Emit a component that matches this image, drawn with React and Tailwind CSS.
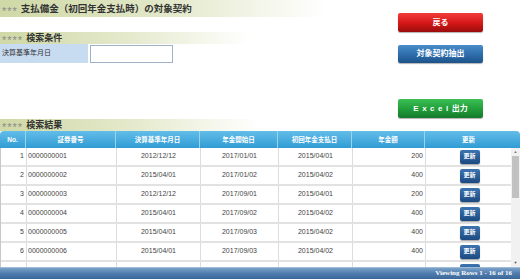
import React from "react";

const rows = [
  ["1", "0000000001", "2012/12/12", "2017/01/01", "2015/04/01", "200"],
  ["2", "0000000002", "2015/04/01", "2017/01/02", "2015/04/02", "400"],
  ["3", "0000000003", "2012/12/12", "2017/09/01", "2015/04/01", "200"],
  ["4", "0000000004", "2015/04/01", "2017/09/02", "2015/04/02", "400"],
  ["5", "0000000005", "2015/04/01", "2017/09/03", "2015/04/02", "400"],
  ["6", "0000000006", "2015/04/01", "2017/09/03", "2015/04/02", "400"],
];

const cols = "grid grid-cols-[26px_90px_84px_78px_74px_73px_87px]";

function SectionBar({ children, width }) {
  return (
    <div
      className={`flex items-center h-[12px] bg-linear-to-r from-[#cfd8a6] via-[#e4e9cb] to-white pl-[2px] ${width}`}
    >
      <span className="text-[11px] text-[#8a8a8a] tracking-[1px] mr-[3px] leading-none mt-[5px]">****</span>
      <span className="text-[9px] font-bold text-[#333] leading-none">{children}</span>
    </div>
  );
}

export default function App() {
  return (
    <div
      className="w-[522px] h-[279px] bg-white overflow-hidden"
      style={{ fontFamily: '"Liberation Sans", "Noto Sans CJK JP", sans-serif' }}
    >
      <div className="flex h-[119px]">
        <div className="w-[398px] flex flex-col">
          <div className="flex items-center h-[17px] w-[325px] bg-linear-to-r from-[#cfd8a6] via-[#e2e8c8] to-white pl-[2px]">
            <span className="text-[11px] text-[#8a8a8a] tracking-[1px] mr-[3px] leading-none mt-[5px]">***</span>
            <span className="text-[9.5px] font-bold text-[#333] leading-none">
              支払備金（初回年金支払時）の対象契約
            </span>
          </div>
          <div className="mt-[15px]">
            <SectionBar width="w-[250px]">検索条件</SectionBar>
          </div>
          <div className="flex items-center h-[19px]">
            <div className="w-[88px] h-full bg-[#c8dcf1] flex items-center pl-[2px] text-[7px] text-[#333]">
              決算基準年月日
            </div>
            <div className="ml-[2px] w-[83px] h-[18px] border border-[#9fb3c8] bg-white"></div>
          </div>
        </div>
        <div className="w-[85px] flex flex-col">
          <div className="mt-[13px] h-[19px] rounded-[2px] bg-linear-to-b from-[#f03a3a] via-[#d81818] to-[#9a0c0c] flex items-center justify-center text-white text-[8px] font-bold shadow-[0_1px_1px_rgba(0,0,0,0.3)]">
            戻る
          </div>
          <div className="mt-[13px] h-[18px] rounded-[2px] bg-linear-to-b from-[#4a8ccb] via-[#2f6fae] to-[#1d528a] flex items-center justify-center text-white text-[8px] font-bold shadow-[0_1px_1px_rgba(0,0,0,0.3)]">
            対象契約抽出
          </div>
          <div className="mt-[36px] h-[19px] rounded-[2px] bg-linear-to-b from-[#3cbf55] via-[#22a03c] to-[#157a2b] flex items-center justify-center text-white text-[8px] font-bold shadow-[0_1px_1px_rgba(0,0,0,0.3)]">
            <span className="tracking-[3.5px]">Excel</span>
            <span>出力</span>
          </div>
        </div>
      </div>

      <SectionBar width="w-[260px]">検索結果</SectionBar>

      <div className="w-[520px]">
        <div className="flex h-[17px] rounded-t-[4px] bg-linear-to-b from-[#62bde9] to-[#2f9cd4] overflow-hidden">
          <div className={`${cols} w-[512px] text-white text-[6.5px] font-bold`}>
            {["No.", "証券番号", "決算基準年月日", "年金開始日", "初回年金支払日", "年金額", "更新"].map((h, i) => (
              <div
                key={i}
                className={`flex items-center justify-center ${i < 6 ? "border-r border-[#9ad3f0]" : ""}`}
              >
                {h}
              </div>
            ))}
          </div>
        </div>
        <div className="flex h-[119px] border-l border-[#c8c8c8] overflow-hidden">
          <div className="w-[511px] overflow-hidden">
            {rows.map((r, i) => (
              <div
                key={i}
                className={`${cols} h-[19px] border-b-2 border-[#e2e2e2] text-[7px] text-[#444]`}
              >
                <div className="flex items-center justify-end pr-[2px] border-r border-[#dcdcdc]">{r[0]}</div>
                <div className="flex items-center pl-[1px] border-r border-[#dcdcdc]">{r[1]}</div>
                <div className="flex items-center justify-center border-r border-[#dcdcdc]">{r[2]}</div>
                <div className="flex items-center justify-center border-r border-[#dcdcdc]">{r[3]}</div>
                <div className="flex items-center justify-center border-r border-[#dcdcdc]">{r[4]}</div>
                <div className="flex items-center justify-end pr-[2px] border-r border-[#dcdcdc]">{r[5]}</div>
                <div className="flex items-center justify-center">
                  <div className="w-[20px] h-[14px] rounded-[2px] bg-linear-to-b from-[#3d74b0] to-[#1b4a82] flex items-center justify-center text-white text-[6px] font-bold shadow-[0_1px_1px_rgba(0,0,0,0.35)]">
                    更新
                  </div>
                </div>
              </div>
            ))}
            <div className={`${cols} h-[19px]`}>
              <div className="border-r border-[#dcdcdc]"></div>
              <div className="border-r border-[#dcdcdc]"></div>
              <div className="border-r border-[#dcdcdc]"></div>
              <div className="border-r border-[#dcdcdc]"></div>
              <div className="border-r border-[#dcdcdc]"></div>
              <div className="border-r border-[#dcdcdc]"></div>
              <div className="flex justify-center pt-[2px]">
                <div className="w-[20px] h-[14px] rounded-[2px] bg-linear-to-b from-[#3d74b0] to-[#1b4a82]"></div>
              </div>
            </div>
          </div>
          <div className="w-[9px] bg-[#f1f1f1] flex flex-col items-center">
            <div className="h-[8px] flex items-center justify-center text-[4px] text-[#777]">▲</div>
            <div className="w-[7px] h-[42px] bg-[#c1c1c1]"></div>
            <div className="flex-1"></div>
            <div className="h-[8px] flex items-center justify-center text-[4px] text-[#555]">▼</div>
          </div>
        </div>
        <div className="h-[12px] bg-linear-to-b from-[#7ba1c9] via-[#4f7cae] to-[#3b6798] border-t border-[#9fbbd8] flex items-center justify-end pr-[8px]">
          <span
            className="text-white text-[7px] font-bold"
            style={{ fontFamily: '"Liberation Serif", serif' }}
          >
            Viewing Rows 1 - 16 of 16
          </span>
        </div>
      </div>
    </div>
  );
}
